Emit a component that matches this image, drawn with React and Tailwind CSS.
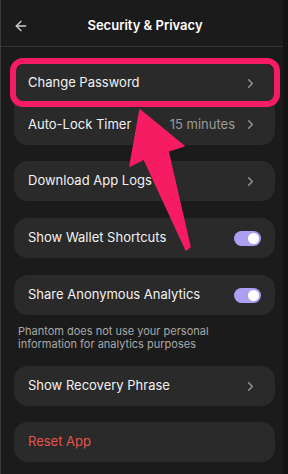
import React from "react";
import { ArrowLeft, ChevronRight } from "lucide-react";

function Chevron() {
  return <ChevronRight size={15} strokeWidth={2} className="text-[#9a9a9a]" />;
}

function Toggle() {
  return (
    <div className="w-[27px] h-[15px] rounded-full bg-[#ab9ff2] flex items-center justify-end pr-[2px]">
      <div className="w-[11px] h-[11px] rounded-full bg-white" />
    </div>
  );
}

function Row({ label, right, className = "", labelClass = "text-[#f2f2f2]", h = "h-[40px]" }) {
  return (
    <div className={`${h} flex items-center justify-between pl-[14px] pr-[17px] ${className}`}>
      <span className={`text-[13px] ${labelClass}`}>{label}</span>
      {right}
    </div>
  );
}

export default function App() {
  return (
    <div
      className="relative w-[288px] h-[474px] bg-[#1b1b1b] overflow-hidden flex"
      style={{ fontFamily: "Inter, 'Noto Sans', sans-serif" }}
    >
      <div className="w-[1px] bg-[#3a3a3a]" />
      <div className="flex-1 flex flex-col">
        <div className="h-[47px] border-b border-[#333333] flex items-center px-[12px] pt-[5px] relative">
          <ArrowLeft size={16} strokeWidth={2} className="text-[#cfcfcf]" />
          <div className="absolute inset-0 flex items-center justify-center pl-[6px] pt-[5px]">
            <span className="text-[13px] font-semibold text-white">Security &amp; Privacy</span>
          </div>
        </div>
        <div className="flex flex-col pl-[13px] pr-[8px] pt-[16px]">
          <div className="rounded-[14px] bg-[#2a2a2a] flex flex-col">
            <Row label="Change Password" h="h-[40px]" right={<Chevron />} />
            <div className="h-[1px] bg-[#222222]" />
            <Row
              label="Auto-Lock Timer"
              h="h-[41px]"
              right={
                <div className="flex items-center gap-[8px]">
                  <span className="text-[13px] text-[#9a9a9a]">15 minutes</span>
                  <Chevron />
                </div>
              }
            />
          </div>
          <Row label="Download App Logs" className="mt-[16px] rounded-[14px] bg-[#2a2a2a]" right={<Chevron />} />
          <Row label="Show Wallet Shortcuts" className="mt-[17px] rounded-[14px] bg-[#2a2a2a] !pr-[14px]" right={<Toggle />} />
          <Row label="Share Anonymous Analytics" className="mt-[17px] rounded-[14px] bg-[#2a2a2a] !pr-[14px]" right={<Toggle />} />
          <p className="mt-[10px] px-[4px] text-[11px] leading-[13px] text-[#a8a8a8]">
            Phantom does not use your personal
            <br />
            information for analytics purposes
          </p>
          <Row label="Show Recovery Phrase" className="mt-[15px] rounded-[14px] bg-[#2a2a2a]" right={<Chevron />} />
          <Row label="Reset App" labelClass="text-[#e5534b]" className="mt-[16px] rounded-[14px] bg-[#2a2a2a]" />
        </div>
      </div>
      <div className="w-[5px] bg-[#141414]" />

      {/* highlight annotation */}
      <div className="absolute left-[10px] top-[58px] w-[270px] h-[49px] rounded-[13px] border-[6px] border-[#f61c64] pointer-events-none" />
      <svg className="absolute left-0 top-0 pointer-events-none" width="288" height="474" viewBox="0 0 288 474">
        <polygon
          points="140,110 184,146 168,151 190,247 186,250 144,159 130,166"
          fill="#f61c64"
          stroke="#f61c64"
          strokeWidth="1.5"
          strokeLinejoin="round"
        />
      </svg>
    </div>
  );
}
